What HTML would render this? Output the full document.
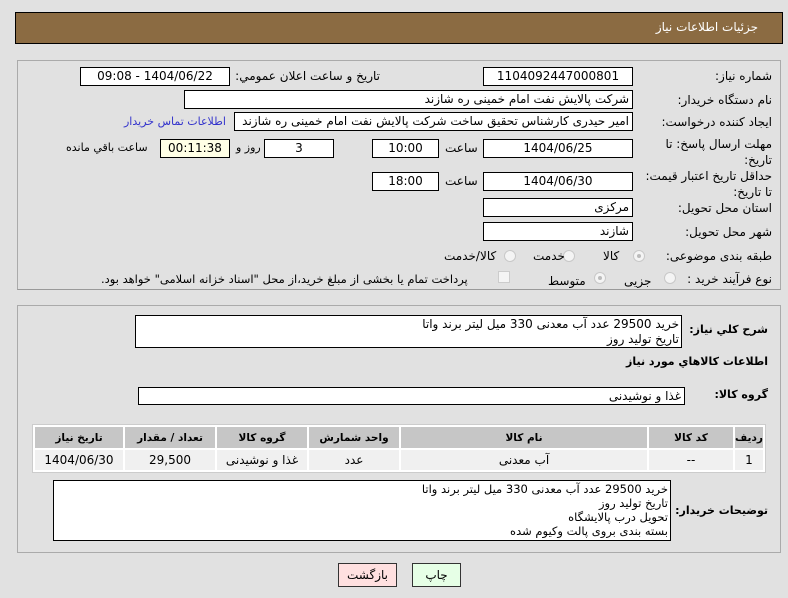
<!DOCTYPE html>
<html><head><meta charset="utf-8"><style>
body{margin:0;width:788px;height:598px;background:#e1e1e1;font-family:Tahoma,"DejaVu Sans","Liberation Sans",sans-serif;font-size:12px;color:#000;position:relative;overflow:hidden}
.a{position:absolute;white-space:nowrap}
.in{position:absolute;background:#fff;border:1px solid #000;box-sizing:border-box;height:19px;line-height:17px;padding:0 3px;white-space:nowrap;overflow:hidden;direction:rtl}
.c{text-align:center}
.l{direction:rtl;text-align:right}
.b{font-weight:bold;font-size:11px}
.rad{position:absolute;width:12px;height:12px;border-radius:50%;border:1px solid #c8c8c8;background:#f4f4f4;box-sizing:border-box}
.rad.on::after{content:"";position:absolute;left:3px;top:3px;width:4px;height:4px;border-radius:50%;background:#bbb}
table{position:absolute;left:32px;top:424px;width:734px;border-collapse:separate;border-spacing:2px;background:#fff;border:1px solid #ccc;font-size:12px;table-layout:fixed}
th{background:#c6c6c6;height:21px;font-weight:bold;padding:0;font-size:10.5px;overflow:hidden;white-space:nowrap}
td{background:#f0f0f0;height:20px;text-align:center;padding:0}
</style></head><body>
<div class="a" style="left:15px;top:12px;width:768px;height:32px;background:#8b6b42;border:1px solid #000;box-sizing:border-box"></div>
<div class="a" style="right:30px;top:20px;color:#fff;font-size:12px">جزئیات اطلاعات نیاز</div>
<div class="a" style="left:17px;top:60px;width:764px;height:230px;border:1px solid #aaa;border-bottom-color:#999;box-sizing:border-box"></div>
<div class="a" style="left:17px;top:305px;width:764px;height:248px;border:1px solid #aaa;box-sizing:border-box"></div>

<div class="a l" style="right:16px;top:69px">شماره نیاز:</div>
<div class="in c" style="left:483px;top:67px;width:150px">1104092447000801</div>
<div class="a l" style="right:408px;top:69px">تاریخ و ساعت اعلان عمومي:</div>
<div class="in c" style="left:80px;top:67px;width:150px">1404/06/22 - 09:08</div>

<div class="a l" style="right:16px;top:93px">نام دستگاه خریدار:</div>
<div class="in" style="left:184px;top:90px;width:449px">شرکت پالایش نفت امام خمینی  ره  شازند</div>

<div class="a l" style="right:16px;top:115px">ایجاد کننده درخواست:</div>
<div class="in" style="left:234px;top:112px;width:399px">امیر  حیدری کارشناس تحقیق ساخت شرکت پالایش نفت امام خمینی  ره  شازند</div>
<div class="a l" style="left:124px;top:115px;color:#3333cc;font-size:11px">اطلاعات تماس خریدار</div>

<div class="a l" style="right:16px;top:136px;line-height:16px;text-align:right">مهلت ارسال پاسخ: تا<br>تاریخ:</div>
<div class="in c" style="left:483px;top:139px;width:150px">1404/06/25</div>
<div class="a" style="left:445px;top:141px">ساعت</div>
<div class="in c" style="left:372px;top:139px;width:67px">10:00</div>
<div class="in c" style="left:264px;top:139px;width:70px">3</div>
<div class="a" style="left:236px;top:141px;font-size:11px">روز و</div>
<div class="in c" style="left:160px;top:139px;width:70px;background:#ffffe6">00:11:38</div>
<div class="a" style="left:66px;top:141px;font-size:11px">ساعت باقي مانده</div>

<div class="a l" style="right:16px;top:168px;line-height:16px;text-align:right">حداقل تاریخ اعتبار قیمت:<br>تا تاریخ:</div>
<div class="in c" style="left:483px;top:172px;width:150px">1404/06/30</div>
<div class="a" style="left:445px;top:174px">ساعت</div>
<div class="in c" style="left:372px;top:172px;width:67px">18:00</div>

<div class="a l" style="right:16px;top:201px">استان محل تحویل:</div>
<div class="in" style="left:483px;top:198px;width:150px">مرکزی</div>
<div class="a l" style="right:16px;top:225px">شهر محل تحویل:</div>
<div class="in" style="left:483px;top:222px;width:150px">شازند</div>

<div class="a l" style="right:16px;top:249px">طبقه بندی موضوعی:</div>
<div class="rad on" style="left:633px;top:250px"></div><div class="a" style="left:603px;top:249px">کالا</div>
<div class="rad" style="left:563px;top:250px"></div><div class="a" style="left:533px;top:249px">خدمت</div>
<div class="rad" style="left:504px;top:250px"></div><div class="a" style="left:444px;top:249px">کالا/خدمت</div>

<div class="a l" style="right:16px;top:272px">نوع فرآیند خرید :</div>
<div class="rad" style="left:664px;top:272px"></div><div class="a" style="left:624px;top:274px">جزیی</div>
<div class="rad on" style="left:594px;top:272px"></div><div class="a" style="left:548px;top:274px">متوسط</div>
<div class="a" style="left:498px;top:271px;width:10px;height:10px;border:1px solid #ccc;background:#f4f4f4"></div>
<div class="a l" style="left:101px;top:272px;font-size:11.5px">پرداخت تمام یا بخشی از مبلغ خرید،از محل "اسناد خزانه اسلامی" خواهد بود.</div>

<div class="a l b" style="right:20px;top:323px">شرح کلي نياز:</div>
<div class="a l" style="left:135px;top:315px;width:547px;height:33px;background:#fff;border:1px solid #000;box-sizing:border-box;line-height:15px;padding:1px 2px;white-space:normal">خرید 29500 عدد آب معدنی 330 میل لیتر برند واتا<br>تاریخ تولید روز</div>
<div class="a l b" style="right:20px;top:355px">اطلاعات كالاهاي مورد نياز</div>
<div class="a l b" style="right:20px;top:388px">گروه کالا:</div>
<div class="in" style="left:138px;top:387px;width:547px;height:18px">غذا و نوشیدنی</div>

<table dir="rtl"><colgroup><col style="width:28px"><col style="width:84px"><col style="width:246px"><col style="width:90px"><col style="width:90px"><col style="width:90px"><col></colgroup>
<tr><th>ردیف</th><th>کد کالا</th><th>نام کالا</th><th>واحد شمارش</th><th>گروه کالا</th><th>تعداد / مقدار</th><th>تاریخ نیاز</th></tr>
<tr><td>1</td><td>--</td><td>آب معدنی</td><td>عدد</td><td>غذا و نوشیدنی</td><td>29,500</td><td>1404/06/30</td></tr></table>

<div class="a l b" style="right:20px;top:504px">توضیحات خریدار:</div>
<div class="a l" style="left:53px;top:480px;width:618px;height:61px;background:#fff;border:1px solid #000;box-sizing:border-box;line-height:14px;padding:1px 2px;white-space:normal;font-size:11.5px;overflow:hidden">خرید 29500 عدد آب معدنی 330 میل لیتر برند واتا<br>تاریخ تولید روز<br>تحویل درب پالایشگاه<br>بسته بندی بروی پالت وکیوم شده</div>

<div class="a c" style="left:338px;top:563px;width:59px;height:24px;line-height:22px;background:#ffe0e0;border:1px solid #333;box-sizing:border-box">بازگشت</div>
<div class="a c" style="left:412px;top:563px;width:49px;height:24px;line-height:22px;background:#e6ffe6;border:1px solid #333;box-sizing:border-box">چاپ</div>
</body></html>
